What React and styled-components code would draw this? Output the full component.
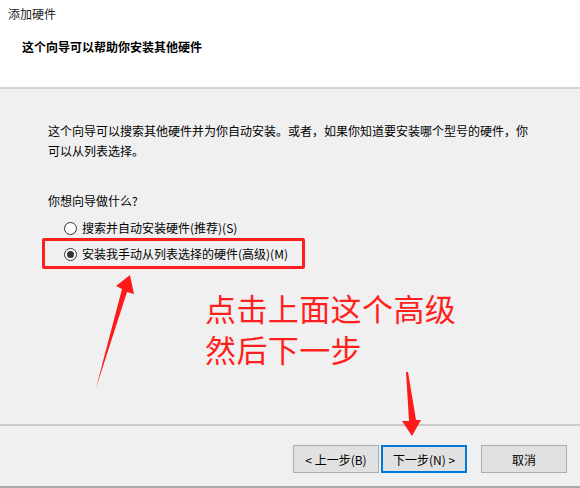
import { createGlobalStyle, styled } from 'styled-components';

const GlobalStyle = createGlobalStyle`
  body {
    margin: 0;
    background: #f0f0f0;
    font-family: "Noto Sans CJK SC", "Noto Sans", sans-serif;
  }
`;

const Wizard = styled.div`
  position: relative;
  width: 580px;
  height: 488px;
  display: flex;
  flex-direction: column;
  background: #f0f0f0;
  overflow: hidden;
`;

const Header = styled.header`
  height: 89px;
  background: #ffffff;
  border-bottom: 2px solid #d2d2d2;
  box-sizing: border-box;
  padding: 5px 0 0 8px;
`;

const WindowTitle = styled.div`
  font-size: 12px;
  line-height: 18px;
  color: #222;
`;

const Subtitle = styled.h1`
  margin: 15px 0 0 14px;
  font-size: 12px;
  line-height: 18px;
  font-weight: bold;
  color: #000;
`;

const Body = styled.main`
  position: relative;
  flex: 1;
  padding: 32px 0 0 48px;
  font-size: 12px;
  color: #000;
`;

const Paragraph = styled.p`
  margin: 0;
  width: 490px;
  line-height: 20px;
`;

const Question = styled.p`
  margin: 30px 0 0;
  line-height: 20px;
`;

const Options = styled.div`
  display: flex;
  flex-direction: column;
  gap: 8px;
  margin-top: 8px;
  padding-left: 16px;
`;

const Option = styled.label`
  position: relative;
  display: flex;
  align-items: center;
  gap: 5px;
  height: 18px;
  line-height: 18px;

  ${p =>
    p.$marked &&
    `
    &::after {
      content: '';
      position: absolute;
      left: -22px;
      top: -7px;
      width: 257px;
      height: 25px;
      border: 3px solid #ff1d1d;
      border-radius: 2px;
    }
  `}
`;

const Radio = styled.span`
  width: 11px;
  height: 11px;
  border: 1px solid #333;
  border-radius: 50%;
  background: #fff;
  display: flex;
  align-items: center;
  justify-content: center;

  &::before {
    content: '';
    width: 7px;
    height: 7px;
    border-radius: 50%;
    background: ${p => (p.$checked ? '#333' : 'transparent')};
  }
`;

const Note = styled.div`
  position: absolute;
  left: 205px;
  top: 198px;
  font-size: 31px;
  line-height: 41px;
  color: #ff1f1f;
  letter-spacing: 0.4px;
`;

const Footer = styled.footer`
  height: 64px;
  box-sizing: border-box;
  border-top: 2px solid #cacaca;
  border-bottom: 2px solid #a8a8a8;
  display: flex;
  justify-content: flex-end;
  align-items: flex-start;
  padding: 19px 13px 0 0;
`;

const ButtonGroup = styled.div`
  display: flex;
  gap: 2px;
  margin-right: 14px;
`;

const Button = styled.button`
  width: 86px;
  height: 28px;
  box-sizing: border-box;
  background: #e1e1e1;
  border: 1px solid ${p => (p.$primary ? '#0078d7' : '#adadad')};
  box-shadow: ${p => (p.$primary ? 'inset 0 0 0 1px #0078d7' : 'none')};
  font-family: inherit;
  font-size: 12px;
  color: #000;
  padding: 0;
`;

const Arrows = styled.svg`
  position: absolute;
  left: 0;
  top: 0;
  pointer-events: none;
`;

export default function App() {
  return (
    <Wizard>
      <GlobalStyle />
      <Header>
        <WindowTitle>添加硬件</WindowTitle>
        <Subtitle>这个向导可以帮助你安装其他硬件</Subtitle>
      </Header>
      <Body>
        <Paragraph>
          这个向导可以搜索其他硬件并为你自动安装。或者，如果你知道要安装哪个型号的硬件，你可以从列表选择。
        </Paragraph>
        <Question>你想向导做什么?</Question>
        <Options>
          <Option>
            <Radio />
            搜索并自动安装硬件(推荐)(S)
          </Option>
          <Option $marked>
            <Radio $checked />
            安装我手动从列表选择的硬件(高级)(M)
          </Option>
        </Options>
        <Note>
          点击上面这个高级
          <br />
          然后下一步
        </Note>
      </Body>
      <Footer>
        <ButtonGroup>
          <Button>&lt; 上一步(B)</Button>
          <Button $primary>下一步(N) &gt;</Button>
        </ButtonGroup>
        <Button>取消</Button>
      </Footer>
      <Arrows width="580" height="488" viewBox="0 0 580 488">
        <polygon
          fill="#ff1a1a"
          points="96,388 122,289 116,286 130,275 134,294 127,292"
        />
        <polygon
          fill="#ff1a1a"
          points="406,372 408,372 416,420 421,420 412,436 402,421 409,421"
        />
      </Arrows>
    </Wizard>
  );
}
